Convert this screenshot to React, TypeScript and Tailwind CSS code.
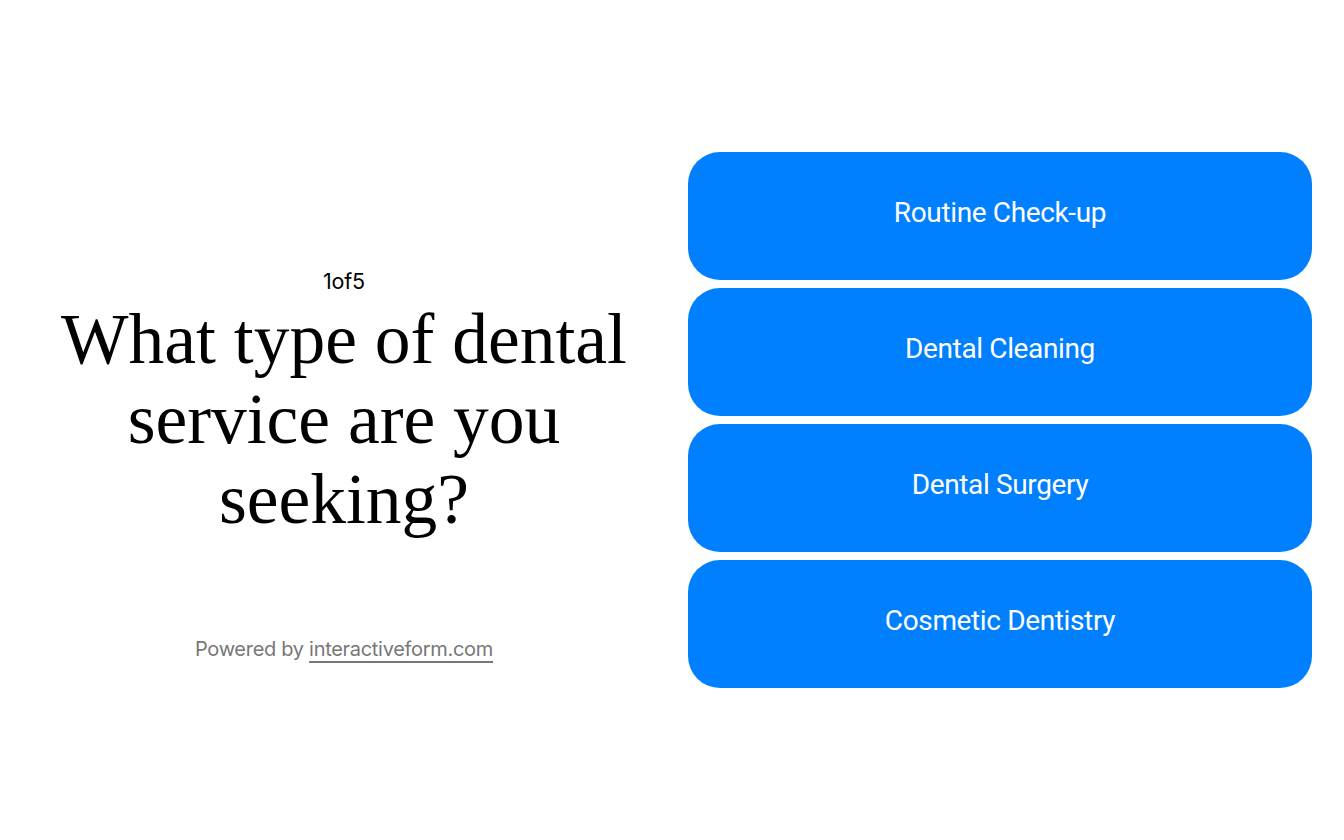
const options = ["Routine Check-up", "Dental Cleaning", "Dental Surgery", "Cosmetic Dentistry"];

export default function App() {
  return (
    <div className="min-h-screen w-full bg-white flex items-center px-8">
      <div className="grid grid-cols-2 gap-8 w-full items-center">
        <div className="flex flex-col items-center text-center pt-[90px]">
          <div className="text-[21.5px] leading-[24px] tracking-[-0.01em] text-black font-['Inter',sans-serif]">
            1of5
          </div>
          <h1 className="mt-[6px] text-[71.5px] leading-[80px] text-black font-['Liberation_Serif',serif] font-normal">
            What type of dental service are you seeking?
          </h1>
          <div className="mt-[98px] text-[20px] leading-[24px] tracking-[-0.015em] text-[#777777] font-['Inter',sans-serif]">
            Powered by{" "}
            <a className="underline decoration-2 underline-offset-[5px] decoration-[#777777]">interactiveform.com</a>
          </div>
        </div>
        <div className="flex flex-col gap-2">
          {options.map((o) => (
            <button
              key={o}
              className="h-[128px] w-full rounded-[32px] bg-[#0080ff] text-white text-[28px] tracking-[-0.013em] pb-[6px] font-['Roboto',sans-serif]"
            >
              {o}
            </button>
          ))}
        </div>
      </div>
    </div>
  );
}
